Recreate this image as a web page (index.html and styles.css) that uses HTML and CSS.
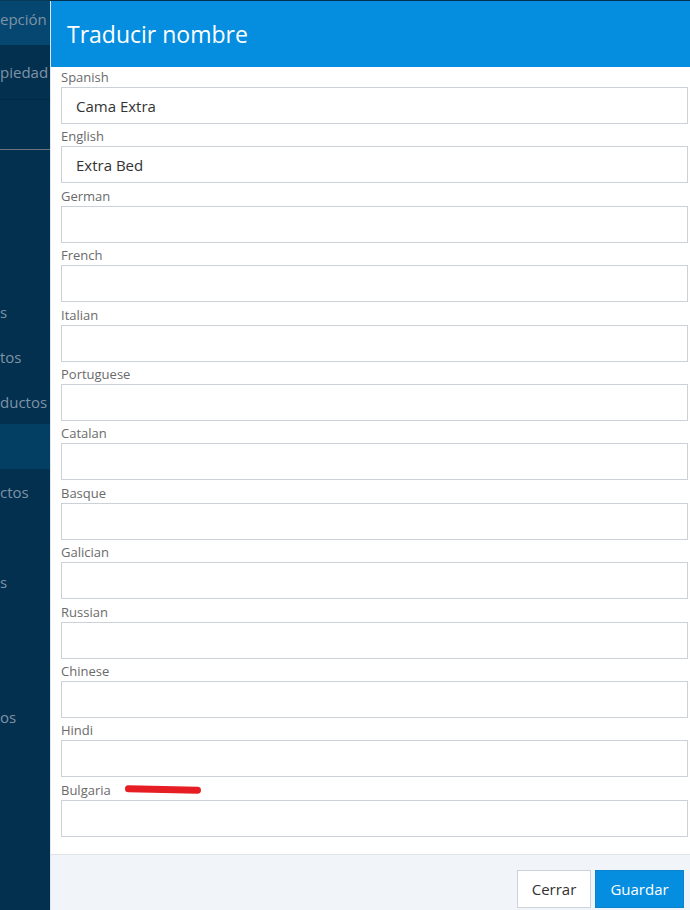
FILE: index.html
```html
<!DOCTYPE html>
<html lang="es">
<head>
<meta charset="utf-8">
<title>Traducir nombre</title>
<link rel="stylesheet" href="styles.css">
</head>
<body>
<div class="page">
  <nav class="sidebar">
    <div class="top-line"></div>
    <div class="side-item side-item--active">epción</div>
    <div class="side-item side-item--tall">piedad</div>
    <div class="side-item side-item--blank"></div>
    <ul class="side-list">
      <li class="side-link"></li>
      <li class="side-link"></li>
      <li class="side-link"></li>
      <li class="side-link">s</li>
      <li class="side-link">tos</li>
      <li class="side-link">ductos</li>
      <li class="side-link side-link--current"></li>
      <li class="side-link">ctos</li>
      <li class="side-link"></li>
      <li class="side-link">s</li>
      <li class="side-link"></li>
      <li class="side-link"></li>
      <li class="side-link">os</li>
    </ul>
  </nav>
  <main class="backdrop"></main>

  <section class="modal">
    <header class="modal-header">
      <h1 class="modal-title">Traducir nombre</h1>
    </header>
    <div class="modal-body">
      <div class="field"><label class="field-label">Spanish</label><input class="field-input" type="text" value="Cama Extra"></div>
      <div class="field"><label class="field-label">English</label><input class="field-input" type="text" value="Extra Bed"></div>
      <div class="field"><label class="field-label">German</label><input class="field-input" type="text"></div>
      <div class="field"><label class="field-label">French</label><input class="field-input" type="text"></div>
      <div class="field"><label class="field-label">Italian</label><input class="field-input" type="text"></div>
      <div class="field"><label class="field-label">Portuguese</label><input class="field-input" type="text"></div>
      <div class="field"><label class="field-label">Catalan</label><input class="field-input" type="text"></div>
      <div class="field"><label class="field-label">Basque</label><input class="field-input" type="text"></div>
      <div class="field"><label class="field-label">Galician</label><input class="field-input" type="text"></div>
      <div class="field"><label class="field-label">Russian</label><input class="field-input" type="text"></div>
      <div class="field"><label class="field-label">Chinese</label><input class="field-input" type="text"></div>
      <div class="field"><label class="field-label">Hindi</label><input class="field-input" type="text"></div>
      <div class="field"><label class="field-label">Bulgaria<span class="mark"></span></label><input class="field-input" type="text"></div>
    </div>
    <footer class="modal-footer">
      <button class="btn btn-default" type="button">Cerrar</button>
      <button class="btn btn-primary" type="button">Guardar</button>
    </footer>
  </section>
</div>
</body>
</html>
```

FILE: styles.css
```css
* { box-sizing: border-box; }

html, body {
  margin: 0;
  padding: 0;
  width: 690px;
  height: 910px;
  overflow: hidden;
  font-family: "Open Sans", "Noto Sans", sans-serif;
}

.page {
  position: relative;
  display: flex;
  width: 690px;
  height: 910px;
  overflow: hidden;
  background: #03304f;
}

.sidebar {
  width: 50px;
  flex: 0 0 50px;
  background: #03304f;
  color: #7f93a6;
  font-size: 15px;
  overflow: hidden;
  white-space: nowrap;
}

.top-line {
  height: 1px;
  background: #0a3a5a;
}

.side-item {
  display: flex;
  align-items: center;
  height: 44px;
}

.side-item--active {
  background: #054770;
  height: 44px;
  padding-bottom: 8px;
}

.side-item--tall {
  height: 55px;
  border-bottom: 1px solid #022944;
}

.side-item--blank {
  height: 50px;
  border-bottom: 1px solid #6a747c;
}

.side-list {
  list-style: none;
  margin: 0;
  padding: 4px 0 0;
}

.side-link {
  display: flex;
  align-items: center;
  height: 45px;
}

.side-link--current {
  background: #033f63;
}

.backdrop {
  flex: 1;
  background: #03304f;
}

.modal {
  position: absolute;
  left: 50px;
  top: 1px;
  width: 649px;
  display: flex;
  flex-direction: column;
  background: #ffffff;
  border-left: 1px solid #dfe5ec;
  border-right: 1px solid #dfe5ec;
}

.modal-header {
  height: 66px;
  background: #058ee0;
  display: flex;
  align-items: center;
  padding-left: 16px;
}

.modal-title {
  margin: 0;
  font-size: 23px;
  font-weight: 400;
  color: #ffffff;
  line-height: 30px;
}

.modal-body {
  padding: 0 10px 17px 10px;
  display: flex;
  flex-direction: column;
  gap: 2.4px;
}

.field {
  display: flex;
  flex-direction: column;
}

.field-label {
  display: flex;
  align-items: center;
  height: 20px;
  font-size: 13px;
  color: #6a6a6a;
  line-height: 20px;
}

.mark {
  display: inline-block;
  width: 76px;
  height: 7px;
  margin-left: 14px;
  margin-top: 0;
  border-radius: 4px;
  background: #e61e24;
  transform: rotate(1.2deg);
}

.field-input {
  display: block;
  width: 100%;
  height: 37px;
  margin: 0;
  padding: 0 14px;
  border: 1px solid #ccd1d8;
  border-radius: 0;
  background: #ffffff;
  font-family: "Open Sans", "Noto Sans", sans-serif;
  font-size: 15px;
  color: #333333;
  outline: none;
}

.modal-footer {
  display: flex;
  justify-content: flex-end;
  gap: 4px;
  padding: 15px 14px 16px;
  background: #f1f5f9;
  border-top: 1px solid #dde4ea;
}

.btn {
  height: 38px;
  margin: 0;
  font-family: "Open Sans", "Noto Sans", sans-serif;
  font-size: 15px;
  border-radius: 0;
  cursor: pointer;
}

.btn-default {
  width: 74px;
  background: #ffffff;
  color: #333333;
  border: 1px solid #cdd3da;
}

.btn-primary {
  width: 89px;
  background: #058ee0;
  color: #ffffff;
  border: 1px solid #0a82cc;
}
```
